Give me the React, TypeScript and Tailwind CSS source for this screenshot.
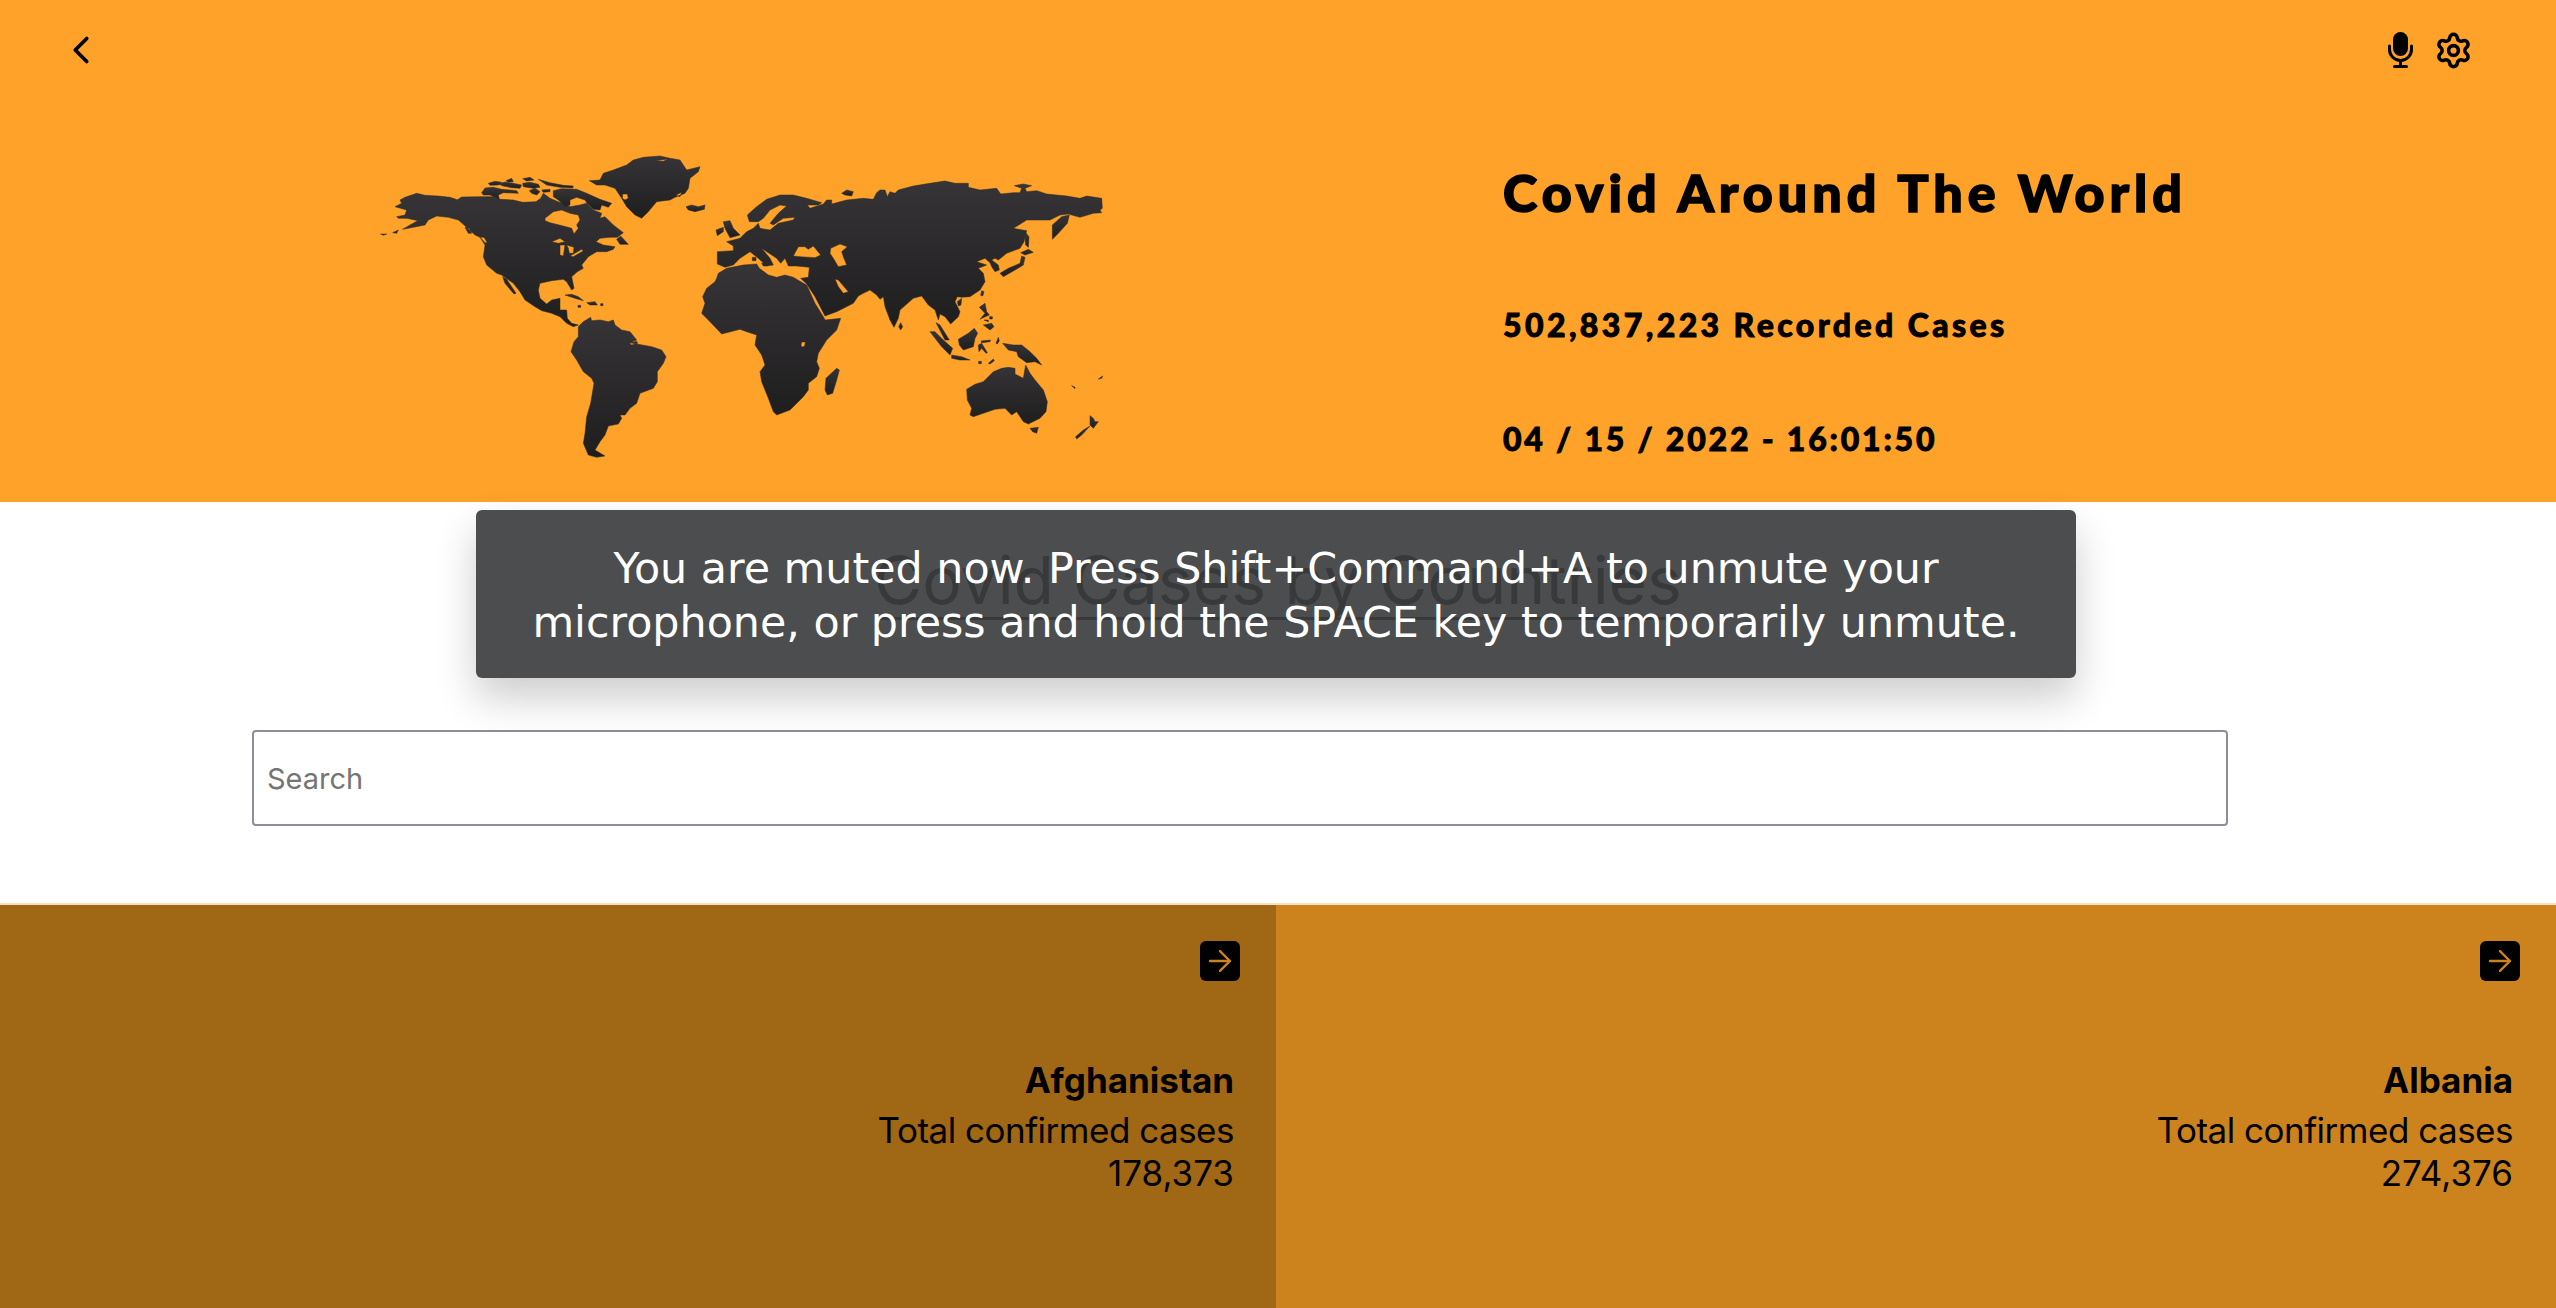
import React from "react";
import { ChevronLeft, Settings, ArrowRight } from "lucide-react";

// outline points traced from the picture, 3 units to the pixel
const shape = (pts: string, dx = 0, dy = 0) =>
  "M" +
  pts
    .trim()
    .split(/\s+/)
    .map((p) => {
      const [x, y] = p.split(",").map(Number);
      return `${x + dx},${y + dy}`;
    })
    .join(" L") +
  "Z";

const B = [960, 120] as const; // europe / africa crop
const C = [1530, 60] as const; // asia / oceania crop

const eurasiaWest1 =
  "172,75 200,50 230,28 270,15 310,15 350,25 395,38 385,45 352,45 360,55 400,42 410,30 425,30 425,42 470,30 520,25 550,28 560,8";
const eurasiaEast =
  "0,60 15,60 22,80 30,65 45,70 55,60 100,48 150,40 195,33 225,40 265,40 265,52 300,60 350,55 362,72 400,68 420,68 425,55 403,47 430,42 455,47 435,55 440,65 470,62 500,72 560,78 600,85 620,78 665,85 667,115 660,120 665,128 640,130 600,142 565,132 540,135 510,150 485,150 440,150 400,175 440,182 435,200 432,215 420,235 380,250 355,270 345,265 335,270 355,285 358,300 345,305 335,290 330,278 315,265 290,275 320,285 295,295 310,310 315,335 300,360 270,380 245,382 232,380 225,395 240,425 235,440 212,462 195,440 180,432 175,450 165,420 145,405 125,378 100,385 60,420 55,445 42,472 30,450 15,410 10,380 0,388";
const eurasiaWest2 =
  "570,328 560,315 540,300 520,310 505,318 490,340 440,365 405,378 375,320 350,282 332,265 355,262 358,232 320,228 295,228 285,205 272,220 260,205 215,175 240,205 250,225 230,228 205,205 180,185 150,205 130,225 105,232 82,222 82,185 130,182 130,168 110,155 150,145 170,125 190,115 205,100 210,115 240,120 265,100 310,90 315,82 280,85 272,90 250,105 240,100 265,70 290,48 270,45 240,60 220,85 205,95 178,95";

const mapLand: string[] = [
  // North America with Hudson Bay, the lakes and the Gulf of California cut out
  shape(
    "105,142 140,130 165,136 205,138 240,142 262,149 275,141 330,140 370,140 390,148 430,150 458,157 498,155 512,145 520,130 540,145 552,150 600,170 630,165 650,160 670,180 695,190 690,205 705,200 730,225 760,248 742,262 720,262 690,265 678,275 700,285 735,290 730,298 710,305 680,305 655,320 635,345 640,355 622,365 605,380 612,415 605,420 590,395 580,388 545,392 510,400 505,420 510,445 530,462 545,450 570,445 570,480 590,480 592,505 605,520 625,525 610,530 590,520 570,500 545,490 515,482 495,470 465,450 450,425 430,400 395,375 380,370 350,345 340,320 345,285 330,262 315,255 290,232 265,210 235,202 200,198 175,210 165,225 130,232 98,238 120,225 165,200 145,212 110,205 85,205 80,200 105,195 110,180 75,170 95,160 90,150"
  ) +
    shape("525,205 550,185 575,180 600,190 625,195 630,210 620,225 625,235 612,252 605,235 580,228 540,218 525,212") +
    shape("570,285 585,285 580,318 570,315") +
    shape("590,285 612,292 610,310 598,310 595,295") +
    shape("600,318 635,298 640,303 610,320") +
    shape("545,275 570,265 585,275 565,280") +
    shape("398,380 410,388 438,430 432,432 405,400") +
    shape("330,262 342,262 352,278 345,278") +
    shape("285,232 298,235 305,250 295,250"),
  shape("550,122 575,116 620,118 650,130 690,148 725,160 715,172 695,165 690,180 670,178 650,158 645,150 620,142 600,150 600,165 585,170 565,150 550,140"),
  shape("355,100 375,94 395,97 385,105 360,106"),
  shape("408,92 425,85 430,95 415,96"),
  shape("458,86 480,82 492,90 470,93"),
  shape("505,88 540,98 580,106 610,108 608,114 570,112 530,105"),
  shape("385,102 405,96 430,100 455,105 450,115 425,113 400,108"),
  shape("335,128 345,114 370,112 395,118 420,120 440,122 445,130 400,128 385,135 388,148 360,135 340,135"),
  shape("458,100 480,97 505,103 510,112 490,115 460,110"),
  shape("478,122 495,115 510,125 500,135 485,130"),
  shape("515,120 540,118 540,125 520,127"),
  shape("740,268 752,258 775,283 750,283"),
  shape("32,252 50,252 40,256"),
  shape("68,248 85,240 80,250"),
  shape("585,435 605,433 625,440 640,452 615,445"),
  shape("650,458 675,455 682,465 660,465"),
  shape("624,466 632,466 632,472 624,472"),
  shape("692,461 699,461 699,467 692,467"),
  // South America
  shape(
    "625,530 640,515 662,502 665,512 690,510 715,515 730,510 735,525 755,540 780,545 800,570 780,578 800,582 845,590 875,600 888,620 880,640 862,665 862,695 850,715 810,730 800,760 780,775 765,795 750,795 755,805 745,822 715,828 705,855 690,875 675,900 705,918 680,922 655,915 640,880 645,850 650,800 662,760 672,700 665,685 640,665 620,630 603,605 612,575 625,560"
  ) + shape("778,580 800,574 803,580 785,585"),
  // Greenland, Iceland
  shape(
    "658,92 690,90 700,70 730,60 770,45 790,30 820,22 870,18 900,25 930,30 950,60 990,50 985,65 960,85 955,115 945,130 915,142 900,150 860,155 835,185 815,205 795,195 770,170 755,145 735,115 705,105 680,105"
  ) +
    shape("758,132 772,132 775,145 765,150 757,145") +
    shape("855,32 895,27 880,34") +
    shape("918,135 935,127 930,140"),
  shape("948,170 965,165 985,170 1005,165 1003,178 975,185 955,180"),
  // Africa
  shape(
    "80,265 85,250 110,235 160,225 200,222 208,235 235,255 260,262 285,255 310,262 340,280 350,285 375,340 400,380 405,390 452,385 440,420 410,450 385,490 380,515 388,535 380,560 355,580 355,600 340,620 300,660 260,675 250,665 235,625 215,575 210,545 225,525 215,495 195,465 200,435 170,425 150,418 95,432 60,395 35,370 45,340 38,320 50,295 75,275",
    ...B
  ) + shape("335,456 346,456 344,468 336,472 333,465", ...B),
  shape("440,535 448,540 440,570 428,610 412,615 405,600 408,565", ...B),
  shape("100,95 120,92 130,115 150,135 120,143 105,115", ...B),
  shape("78,120 100,112 100,125 82,137", ...B),
  shape("455,10 470,0 490,5 485,18 465,15", ...B),
  shape("187,202 198,202 198,212 187,212", ...B),
  shape("215,220 235,218 232,228 220,228", ...B),
  // Asia's islands
  shape("62,458 68,470 62,480 56,470", ...C),
  shape("517,165 545,140 568,135 562,160 535,190 517,208", ...C),
  shape("437,188 447,200 445,232 437,225 435,205", ...C),
  shape("360,310 385,295 420,280 425,258 435,262 430,285 405,300 370,320", ...C),
  shape("422,248 445,238 460,247 435,255", ...C),
  shape("305,362 312,365 308,378 302,376", ...C),
  shape("232,395 245,385 243,405 235,408", ...C),
  shape("298,412 315,400 320,425 328,435 305,445 300,448 315,430", ...C),
  shape("312,450 325,450 325,455", ...C),
  shape("310,465 335,460 342,470 330,480", ...C),
  shape("329,440 337,440 337,447 329,447", ...C),
  shape("235,508 265,490 283,475 293,490 285,505 280,530 250,540 238,525", ...C),
  shape("150,485 165,485 190,510 218,535 210,555 185,530", ...C),
  shape("168,458 180,465 208,510 195,510", ...C),
  shape("215,555 245,560 270,570 240,570 215,565", ...C),
  shape("295,525 305,520 322,548 318,550 305,535 297,545", ...C),
  shape("303,513 332,510 330,515 305,518", ...C),
  shape("348,520 355,502 358,512 352,522", ...C),
  shape("368,520 400,525 425,525 450,545 470,565 485,585 465,575 440,578 415,560 410,545 385,540", ...C),
  shape("325,580 340,567 343,572 330,582", ...C),
  shape("296,574 304,574 304,581 296,581", ...C),
  shape(
    "260,658 285,643 310,635 340,605 365,595 385,592 405,595 405,612 430,625 437,585 450,610 465,630 490,660 502,695 498,725 480,745 445,762 430,755 410,725 395,735 375,715 345,718 310,730 280,740 270,735 275,715 262,690",
    ...C
  ),
  shape("450,775 475,772 470,790 458,785", ...C),
  shape("630,737 640,745 645,755 655,755 640,775 630,765", ...C),
  shape("630,768 605,795 590,807 587,800 610,780", ...C),
  shape("575,647 585,652 585,656", ...C),
  shape("655,627 668,618 665,625", ...C),
];

const eurasia =
  shape(eurasiaWest1, ...B).slice(0, -1) +
  " L" +
  shape(eurasiaEast, ...C).slice(1, -1) +
  " L" +
  shape(eurasiaWest2, ...B).slice(1) +
  shape("310,198 325,170 345,170 355,178 370,168 392,195 375,203 330,200", ...B) +
  shape("422,175 450,162 472,170 455,185 460,200 470,225 445,230 430,205 420,190", ...B) +
  shape("435,268 445,270 475,305 460,310 445,290", ...B);

function WorldMap() {
  return (
    <svg viewBox="0 0 2280 960" className="w-[760px] h-[320px]" aria-hidden="true">
      <defs>
        <linearGradient id="land" x1="0" y1="0" x2="0" y2="1">
          <stop offset="0" stopColor="#363436" />
          <stop offset="1" stopColor="#1f1e1f" />
        </linearGradient>
      </defs>
      <g fill="url(#land)" fillRule="evenodd" stroke="#2b2a2b" strokeWidth="1.5" strokeLinejoin="round">
        {mapLand.map((d, i) => (
          <path key={i} d={d} />
        ))}
        <path d={eurasia} />
      </g>
    </svg>
  );
}

function MicIcon() {
  return (
    <svg viewBox="0 0 25 36" className="w-[25px] h-[36px]" aria-hidden="true">
      <rect x="5" y="0" width="15" height="24" rx="7.5" fill="#000" />
      <path d="M1.5 14v3.5a11 11 0 0 0 22 0V14M12.5 28.5v5.5M6.5 34.5h12" fill="none" stroke="#000" strokeWidth="3" strokeLinecap="round" />
    </svg>
  );
}

function CountryCard({
  name,
  cases,
  bg,
  pad,
  pull,
}: {
  name: string;
  cases: string;
  bg: string;
  pad: string;
  pull: string;
}) {
  return (
    <div className={`flex flex-col items-end h-[404px] pt-[36px] ${bg} ${pad}`}>
      <div className={`flex items-center justify-center w-10 h-10 rounded-md bg-black ${pull}`}>
        <ArrowRight size={34} strokeWidth={1.7} className="text-[#cc831e]" />
      </div>
      <div className="mt-[78px] text-right text-[35px] leading-[43px] text-black">
        <p className="font-bold">{name}</p>
        <p className="mt-[7px] tracking-[-0.5px]">Total confirmed cases</p>
        <p>{cases}</p>
      </div>
    </div>
  );
}

export default function App() {
  return (
    <div className="relative h-[1308px] w-full overflow-hidden bg-white font-['Inter',sans-serif] text-black">
      <header className="h-[502px] bg-[#ffa229] flex flex-col">
        <div className="flex items-center justify-between h-[100px] pl-[58px] pr-[83px]">
          <ChevronLeft size={46} strokeWidth={1.9} />
          <div className="flex items-center gap-[21px]">
            <MicIcon />
            <Settings size={39} strokeWidth={2.2} />
          </div>
        </div>
        <div className="flex flex-1">
          <div className="w-[1503px] pl-[370px] pt-[50px]">
            <WorldMap />
          </div>
          <div className="flex-1 font-['Lato',sans-serif] font-black [-webkit-text-stroke:0.9px_black]">
            <h1 className="mt-[62px] text-[52px] leading-[60px] tracking-[5px] [-webkit-text-stroke:1.6px_black]">Covid Around The World</h1>
            <p className="mt-[83px] text-[32px] leading-[40px] tracking-[3.4px]">502,837,223 Recorded Cases</p>
            <p className="mt-[74px] text-[32px] leading-[40px] tracking-[2.8px]">04 / 15 / 2022 - 16:01:50</p>
          </div>
        </div>
      </header>

      <main className="h-[401px] flex flex-col items-center">
        <h2 className="mt-[41px] inline-block border-b-[3px] border-black text-[66px] leading-[74px] font-normal">
          Covid Cases by Countries
        </h2>
        <input
          placeholder="Search"
          className="mt-[110px] self-start ml-[252px] w-[1976px] h-[96px] px-[13px] border-2 border-[#8e8e9b] rounded-[4px] text-[29px] placeholder:text-[#757575] outline-none"
        />
      </main>

      <section className="grid grid-cols-[1276px_1fr] border-t-2 border-[#f6e0c0]">
        <CountryCard name="Afghanistan" cases="178,373" bg="bg-[#a06714]" pad="pr-[42px]" pull="-mr-[6px]" />
        <CountryCard name="Albania" cases="274,376" bg="bg-[#cc831e]" pad="pr-[43px]" pull="-mr-[7px]" />
      </section>

      <div className="absolute left-[476px] top-[510px] flex h-[168px] w-[1600px] items-center justify-center rounded-md bg-[rgba(61,62,64,0.92)] px-[40px] pt-[2px] text-center font-['DejaVu_Sans',sans-serif] text-[42.8px] leading-[54px] text-white shadow-[0_20px_40px_rgba(0,0,0,0.2)]">
        <p>
          You are muted now. Press Shift+Command+A to unmute your
          <br />
          microphone, or press and hold the SPACE key to temporarily unmute.
        </p>
      </div>
    </div>
  );
}
